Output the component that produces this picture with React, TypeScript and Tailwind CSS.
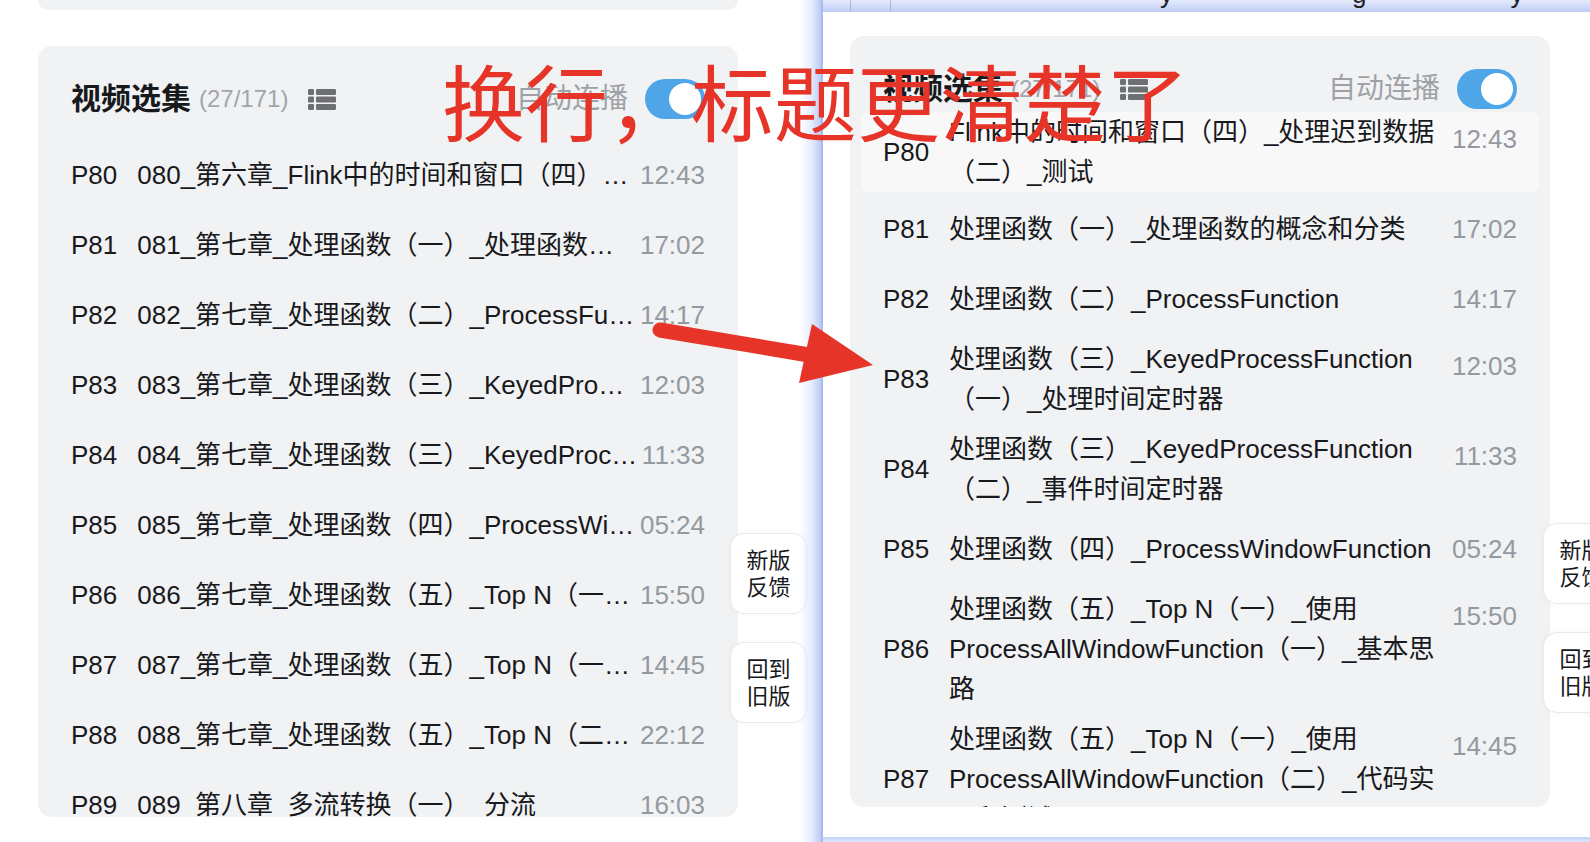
import clsx from "clsx";

const FONT = "font-['Liberation_Sans','Noto_Sans_CJK_SC',sans-serif]";

const oldRows: [string, string, string][] = [
  ["P80", "080_第六章_Flink中的时间和窗口（四）_处理迟到数据（二）_测试", "12:43"],
  ["P81", "081_第七章_处理函数（一）_处理函数的概念和分类", "17:02"],
  ["P82", "082_第七章_处理函数（二）_ProcessFunction", "14:17"],
  ["P83", "083_第七章_处理函数（三）_KeyedProcessFunction（一）_处理时间定时器", "12:03"],
  ["P84", "084_第七章_处理函数（三）_KeyedProcessFunction（二）_事件时间定时器", "11:33"],
  ["P85", "085_第七章_处理函数（四）_ProcessWindowFunction", "05:24"],
  ["P86", "086_第七章_处理函数（五）_Top N（一）_使用ProcessAllWindowFunction（一）_基本思路", "15:50"],
  ["P87", "087_第七章_处理函数（五）_Top N（一）_使用ProcessAllWindowFunction（二）_代码实现和测试", "14:45"],
  ["P88", "088_第七章_处理函数（五）_Top N（二）_使用KeyedProcessFunction", "22:12"],
  ["P89", "089_第八章_多流转换（一）_分流", "16:03"]
];

type NewRow = { p: string; lines: string[]; t: string; active?: boolean };

const newRows: NewRow[] = [
  { p: "P80", lines: ["Flink中的时间和窗口（四）_处理迟到数据", "（二）_测试"], t: "12:43", active: true },
  { p: "P81", lines: ["处理函数（一）_处理函数的概念和分类"], t: "17:02" },
  { p: "P82", lines: ["处理函数（二）_ProcessFunction"], t: "14:17" },
  { p: "P83", lines: ["处理函数（三）_KeyedProcessFunction", "（一）_处理时间定时器"], t: "12:03" },
  { p: "P84", lines: ["处理函数（三）_KeyedProcessFunction", "（二）_事件时间定时器"], t: "11:33" },
  { p: "P85", lines: ["处理函数（四）_ProcessWindowFunction"], t: "05:24" },
  { p: "P86", lines: ["处理函数（五）_Top N（一）_使用", "ProcessAllWindowFunction（一）_基本思", "路"], t: "15:50" },
  { p: "P87", lines: ["处理函数（五）_Top N（一）_使用", "ProcessAllWindowFunction（二）_代码实", "现和测试"], t: "14:45" }
];

// --- small pieces ------------------------------------------------------------
function ListIcon() {
  return (
    <svg width="28" height="21" viewBox="0 0 28 21" className="ml-[20px] shrink-0">
      {[0, 7.5, 15].map((y) => (
        <g key={y} fill="#6e6f71">
          <rect x="0" y={y} width="6" height="6" rx="1.2" />
          <rect x="8" y={y} width="20" height="6" rx="1.2" />
        </g>
      ))}
    </svg>
  );
}

function Toggle() {
  return (
    <div className="flex h-[40px] w-[60px] shrink-0 items-center justify-end rounded-full bg-[#4ea6e8] p-[4px]">
      <div className="h-[32px] w-[32px] rounded-full bg-white" />
    </div>
  );
}

function Header() {
  return (
    <div className="flex items-center px-[33px] pt-[32px]">
      <span className="text-[30px] font-bold leading-[40px] text-[#18191c]">视频选集</span>
      <span className="ml-2 text-[24px] text-[#a2a5ab]">(27/171)</span>
      <ListIcon />
      <span className="ml-auto mr-[17px] text-[28px] text-[#9ea1a6]">自动连播</span>
      <Toggle />
    </div>
  );
}

function SideBtn({ a, b, className }: { a: string; b: string; className?: string }) {
  return (
    <div
      className={clsx(
        "absolute flex h-[81px] w-[77px] flex-col items-center justify-center rounded-[14px] border border-[#e8e9eb] bg-white text-[22px] leading-[27px] text-[#18191c] shadow-[0_0_6px_rgba(0,0,0,0.04)]",
        className
      )}
    >
      <span>{a}</span>
      <span>{b}</span>
    </div>
  );
}

// --- old version (left) --------------------------------------------------------
function OldPane() {
  return (
    <div className="w-[800px] shrink-0">
      <div className="ml-[38px] h-[10px] w-[700px] rounded-b-[14px] bg-[#f1f2f3]" />
      <div className="ml-[38px] mt-[36px] h-[771px] w-[700px] overflow-hidden rounded-[14px] bg-[#f1f2f3]">
        <Header />
        <div className="mt-[20px] px-[33px] text-[#18191c]">
          {oldRows.map(([p, title, time]) => (
            <div key={p} className="flex h-[70px] items-center text-[26px]">
              <span className="shrink-0">{p}</span>
              <span className="ml-5 min-w-0 flex-1 truncate">{title}</span>
              <span className="ml-[3px] shrink-0 text-[#9499a0]">{time}</span>
            </div>
          ))}
        </div>
      </div>
      <SideBtn a="新版" b="反馈" className="left-[730px] top-[533px]" />
      <SideBtn a="回到" b="旧版" className="left-[730px] top-[642px]" />
    </div>
  );
}

// --- new version (right, captured window) ----------------------------------
function NewPane() {
  return (
    <div className="relative z-10 flex flex-1">
      <div className="w-[23px] shrink-0 border-r-2 border-[#a8bcf0] bg-linear-to-r from-white/0 via-[#dfe7fc]/70 to-[#bccbf5]" />
      <div className="flex min-w-0 flex-1 flex-col">
        <div className="flex h-[12px] shrink-0 overflow-hidden bg-linear-to-b from-[#e6ecfd] to-[#bdccf6] text-[#1f2329]">
          <div className="ml-[27px] w-px bg-[#a7b6dd]" />
          <div className="ml-[39px] w-px bg-[#a7b6dd]" />
          <span className="-mt-[19px] ml-[269px] text-[26px] leading-[26px]">y</span>
          <span className="-mt-[19px] ml-[179px] text-[26px] leading-[26px]">g</span>
          <span className="-mt-[19px] ml-[144px] text-[26px] leading-[26px]">y</span>
        </div>
        <div className="relative flex-1 bg-white pl-[27px] pt-[24px]">
          <div className="h-[771px] w-[700px] overflow-hidden rounded-[14px] bg-[#f1f2f3]">
            <Header />
            <div className="px-[11px] text-[26px] leading-[40px] text-[#18191c]">
              {newRows.map((r) => (
                <div
                  key={r.p}
                  className={clsx(
                    "flex items-center px-[22px]",
                    r.active ? "my-[2px] rounded-[6px] bg-[#f8f8f9]" : "min-h-[70px] py-[5px]"
                  )}
                >
                  <span className="w-[46px] shrink-0">{r.p}</span>
                  <div className="ml-5 min-w-0 flex-1">
                    {r.lines.map((l) => (
                      <div key={l} className="whitespace-nowrap">
                        {l}
                      </div>
                    ))}
                  </div>
                  <span
                    className={clsx(
                      "ml-[8px] shrink-0 text-[#9499a0]",
                      r.lines.length > 1 ? "mt-[7px] self-start" : "self-center"
                    )}
                  >
                    {r.t}
                  </span>
                </div>
              ))}
            </div>
          </div>
          <SideBtn a="新版" b="反馈" className="left-[720px] top-[511px]" />
          <SideBtn a="回到" b="旧版" className="left-[720px] top-[620px]" />
        </div>
        <div className="h-[5px] shrink-0 bg-linear-to-b from-[#c3d1f7] to-[#dde6fc]" />
      </div>
    </div>
  );
}

export default function App() {
  return (
    <div className={clsx("relative flex h-[842px] w-[1590px] overflow-hidden bg-white", FONT)}>
      <OldPane />
      <NewPane />

      {/* annotation */}
      <div className="absolute left-[442px] top-[58px] z-20 whitespace-nowrap font-['Noto_Sans_CJK_SC',sans-serif] text-[83px] leading-none text-[#e63428]">
        换行，标题更清楚了
      </div>
      <svg className="pointer-events-none absolute left-0 top-0 z-30" width="1590" height="842">
        <line x1="660" y1="330" x2="815" y2="356" stroke="#e63428" strokeWidth="15" strokeLinecap="round" />
        <polygon points="812,324 873,365 799,383" fill="#e63428" />
      </svg>
    </div>
  );
}
